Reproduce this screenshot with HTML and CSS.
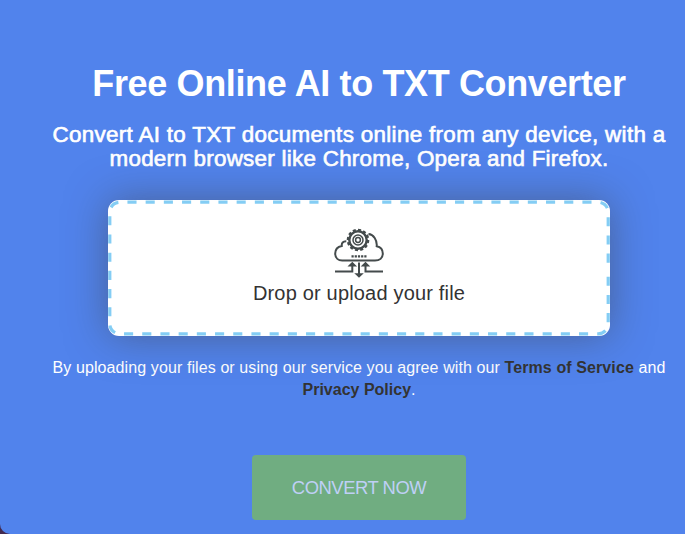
FILE: index.html
```html
<!DOCTYPE html>
<html lang="en">
<head>
<meta charset="utf-8">
<title>Free Online AI to TXT Converter</title>
<link rel="stylesheet" href="styles.css">
</head>
<body>
<main class="page">
  <h1 class="title">Free Online AI to TXT Converter</h1>
  <h2 class="subtitle"><span class="line sub-a">Convert AI to TXT documents online from any device, with a</span> <span class="line sub-b">modern browser like Chrome, Opera and Firefox.</span></h2>
  <section class="drop">
    <svg class="outline" viewBox="0 0 502 136" aria-hidden="true"><path pathLength="135" d="M500.2 76.7V123.8A10 10 0 0 1 490.2 133.8H11.8A10 10 0 0 1 1.8 123.8V12.2A10 10 0 0 1 11.8 2.2H490.2A10 10 0 0 1 500.2 12.2V62.7"/></svg>
    <svg class="cloud" viewBox="0 0 50 50" aria-hidden="true">
      <path class="stroke" d="M12.3 13.3C9 13.2 7.4 15 7.8 18C3.6 18.8 1.2 22 1.2 25.6C1.2 30.3 4.5 32.6 8.2 32.6H41C45.5 32.6 48.8 30 48.8 25.6C48.8 21.8 46.2 19 42.7 18.3C43.3 12 39.5 6.4 34.5 6.1"/>
      <circle class="teeth" cx="24" cy="12" r="9.9" pathLength="24"/>
      <circle class="gear" cx="24" cy="12" r="8.7"/>
      <circle class="ring" cx="24" cy="12" r="5"/>
      <circle class="ring" cx="24" cy="12" r="2.4"/>
      <path class="dots" d="M17.5 28.4H32.5"/>
      <path class="stroke" d="M1 43.5H18.3V35M49 43.5H31.5V35M25 34.5V48"/>
      <path class="head" d="M15.5 37.6L18.3 34.9L21.1 37.6ZM28.7 37.6L31.5 34.9L34.3 37.6ZM22.2 46L25 48.7L27.8 46Z"/>
    </svg>
    <p class="drop-label">Drop or upload your file</p>
  </section>
  <p class="terms"><span class="line terms-a">By uploading your files or using our service you agree with our <a>Terms of Service</a> and</span> <span class="line terms-b"><a>Privacy Policy</a>.</span></p>
  <button class="convert">CONVERT NOW</button>
</main>
</body>
</html>
```
FILE: styles.css
```css
* { box-sizing: border-box; }
body { margin: 0; background: #42294f; font-family: "Liberation Sans", Arial, sans-serif; }
.page { height: 534px; padding: 63px 19px 0 52px; display: flex; flex-direction: column; align-items: center; overflow: hidden; background: #5183ec; border-bottom-left-radius: 10px; color: #fff; }
.title { margin: 0; font-size: 36px; line-height: 42px; letter-spacing: -.37px; white-space: nowrap; }
.subtitle { margin: 18px 0 0; font-size: 22.4px; line-height: 24.4px; font-weight: 400; text-align: center; -webkit-text-stroke: .65px #fff; }
.sub-a { letter-spacing: .33px; }
.sub-b { letter-spacing: .27px; }
.line { display: block; white-space: nowrap; }
.drop { position: relative; width: 502px; height: 136px; flex: none; margin-top: 28px; padding-top: 28px; display: flex; flex-direction: column; align-items: center; background: #fff; border-radius: 11px; box-shadow: 0 0 40px rgba(64, 64, 64, .5); color: #333; }
.outline { position: absolute; inset: 0; width: 502px; height: 136px; fill: none; stroke: #84cdf4; stroke-width: 3.2; stroke-dasharray: 1 1; }
.cloud { width: 50px; height: 50px; fill: none; stroke: #444b4c; }
.stroke { stroke-width: 2; }
.head { stroke-width: 1.6; fill: #444b4c; }
.gear { fill: #fff; stroke-width: 2.4; }
.teeth { stroke-width: 2.8; stroke-dasharray: 1.15 .85; }
.ring { stroke-width: 1.5; }
.dots { stroke-width: 2.2; stroke-dasharray: 2.2 1; }
.drop-label { margin: 4px 0 0; font-size: 20px; line-height: 23px; letter-spacing: .18px; white-space: nowrap; }
.terms { margin: 21px 0 0; font-size: 16px; line-height: 22px; text-align: center; }
.terms-a { letter-spacing: .1px; }
.terms a { font-weight: 700; color: #333; }
.convert { margin: 54px 0 0; padding: 1px 0 0; width: 214px; height: 65px; flex: none; border: 0; border-radius: 4px; background: #70ad81; color: #bfd0f6; font: 18.4px "Liberation Sans", Arial, sans-serif; letter-spacing: -.45px; white-space: nowrap; }
```
